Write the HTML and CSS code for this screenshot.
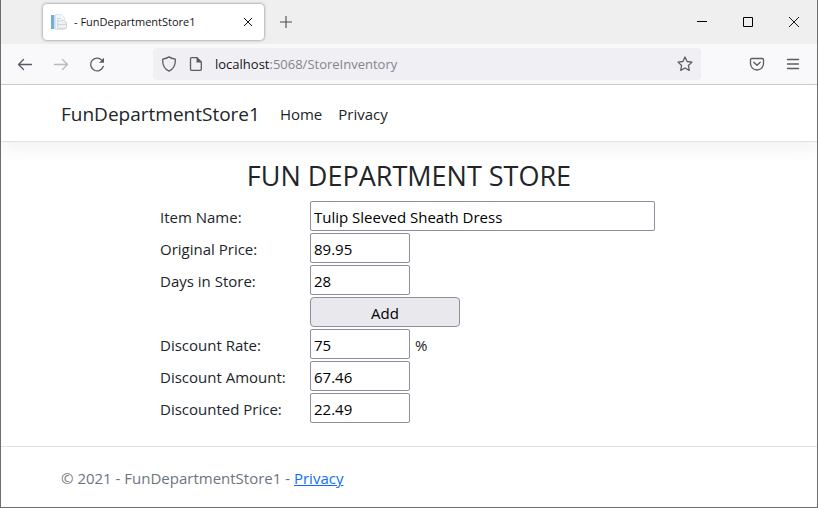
FILE: index.html
```html
<!DOCTYPE html>
<html lang="en">
<head>
    <meta charset="UTF-8">
    <meta name="viewport" content="width=device-width, initial-scale=1.0">
    <title>- FunDepartmentStore1</title>
    <link rel="stylesheet" href="styles.css">
</head>
<body>
    <div class="window">
        <!-- Tab strip -->
        <div class="tab-bar">
            <div class="tab">
                <svg class="favicon" width="16" height="16" viewBox="0 0 16 16">
                    <path d="M4.500.5h6l3 3v12h-9z" fill="#f4f6f8" stroke="#dfe5ea"/>
                    <path d="M0 1h3v14H0z" fill="#6fb1dc"/>
                    <path d="M3 1h1v14H3z" fill="#c5e0f1"/>
                    <path d="M6 4.500h4M6 6.500h2M6 12.500h1" stroke="#cdd5dc"/>
                    <path d="M6.500 8.500v-1h2l1-1h4l1 1v1h1v6h-9z" fill="#eef1f4" stroke="#cfd6dc"/>
                    <path d="M7 10.500h8" stroke="#cfd6dc"/>
                </svg>
                <span class="tab-title">- FunDepartmentStore1</span>
                <button class="tab-close" aria-label="Close tab">
                    <svg width="10" height="10" viewBox="0 0 10 10"><path d="M1 1l8 8M9 1l-8 8" stroke="#15141a"/></svg>
                </button>
            </div>
            <button class="icon-btn new-tab" aria-label="New tab">
                <svg width="12" height="12" viewBox="0 0 12 12"><path d="M6 0v12M0 6h12" stroke="#4a4a55" stroke-width="1.1"/></svg>
            </button>
            <div class="window-controls">
                <button class="icon-btn" aria-label="Minimize">
                    <svg width="10" height="10" viewBox="0 0 10 10"><path d="M0 4.500h10" stroke="#000"/></svg>
                </button>
                <button class="icon-btn" aria-label="Maximize">
                    <svg width="10" height="10" viewBox="0 0 10 10"><path d="M.5.5h9v9h-9z" fill="none" stroke="#000"/></svg>
                </button>
                <button class="icon-btn" aria-label="Close">
                    <svg width="10" height="10" viewBox="0 0 10 10"><path d="M0 0l10 10M10 0L0 10" stroke="#000" stroke-width=".9"/></svg>
                </button>
            </div>
        </div>

        <!-- Address bar -->
        <div class="toolbar">
            <div class="nav-buttons">
                <button class="icon-btn" aria-label="Back">
                    <svg width="16" height="16" viewBox="0 0 16 16" class="line"><path d="M14.500 8.500H1.500M6.500 3.500l-5 5 5 5"/></svg>
                </button>
                <button class="icon-btn" aria-label="Forward" disabled>
                    <svg width="16" height="16" viewBox="0 0 16 16" class="line"><path d="M1.500 8.500h13M9.500 3.500l5 5-5 5"/></svg>
                </button>
                <button class="icon-btn" aria-label="Reload">
                    <svg width="16" height="16" viewBox="0 0 16 16" class="line"><path d="M14.300 10.300A6.400 6.400 0 1 1 12.800 4.100"/><path d="M15 1.800v5h-5z" fill="#5b5b66" stroke="none"/></svg>
                </button>
            </div>
            <div class="url-bar">
                <svg width="16" height="16" viewBox="0 0 16 16" class="line"><path d="M8 .9c2 1.400 4 1.900 6.300 2.300v1.800c0 4.500-2 8-6.300 10.100C3.700 13 1.700 9.500 1.700 5V3.200C4 2.800 6 2.300 8 .9z"/></svg>
                <svg width="16" height="16" viewBox="0 0 16 16" class="line"><path d="M3.500 1.700h5.500l4.300 4.300v7.300a1 1 0 0 1-1 1H3.500a1 1 0 0 1-1-1V2.700a1 1 0 0 1 1-1z"/><path d="M8.500 1.200v5.300h5.300z" fill="#5b5b66" stroke="none"/></svg>
                <span class="url"><span class="host">localhost</span>:5068/StoreInventory</span>
                <svg width="16" height="16" viewBox="0 0 16 16" class="line"><path d="M8 1l2.100 4.500 4.900.6-3.600 3.400.9 4.900L8 12l-4.300 2.400.9-4.900L1 6.100l4.900-.6z"/></svg>
            </div>
            <div class="menu-buttons">
                <button class="icon-btn" aria-label="Save to Pocket">
                    <svg width="16" height="16" viewBox="0 0 16 16" class="line"><path d="M2.700 2.500h10.600a1.200 1.200 0 0 1 1.200 1.200v3.800a6.500 6.500 0 0 1-13 0V3.700a1.200 1.200 0 0 1 1.200-1.200z"/><path d="M4.800 6.200L8 9.300l3.200-3.100"/></svg>
                </button>
                <button class="icon-btn" aria-label="Open menu">
                    <svg width="16" height="16" viewBox="0 0 16 16" class="line"><path d="M2.500 3.500h11M2.500 8h11M2.500 12.500h11"/></svg>
                </button>
            </div>
        </div>

        <!-- Page -->
        <header class="site-header">
            <a class="brand" href="#">FunDepartmentStore1</a>
            <nav class="site-nav">
                <a href="#">Home</a>
                <a href="#">Privacy</a>
            </nav>
        </header>

        <main class="main">
            <h1>FUN DEPARTMENT STORE</h1>
            <form class="inventory">
                <label for="itemName">Item Name:</label>
                <div class="field"><input type="text" class="wide" id="itemName" value="Tulip Sleeved Sheath Dress"></div>

                <label for="originalPrice">Original Price:</label>
                <div class="field"><input type="text" id="originalPrice" value="89.95"></div>

                <label for="daysInStore">Days in Store:</label>
                <div class="field"><input type="text" id="daysInStore" value="28"></div>

                <button type="button" class="add-btn">Add</button>

                <label for="discountRate">Discount Rate:</label>
                <div class="field"><input type="text" id="discountRate" value="75"> <span class="unit">%</span></div>

                <label for="discountAmount">Discount Amount:</label>
                <div class="field"><input type="text" id="discountAmount" value="67.46"></div>

                <label for="discountedPrice">Discounted Price:</label>
                <div class="field"><input type="text" id="discountedPrice" value="22.49"></div>
            </form>
        </main>

        <footer class="site-footer">
            &copy; 2021 - FunDepartmentStore1 - <a href="#">Privacy</a>
        </footer>
    </div>
</body>
</html>
```

FILE: styles.css
```css
* {
    box-sizing: border-box;
}

body {
    margin: 0;
    font-family: "Segoe UI", "Open Sans", sans-serif;
    font-size: 15px;
    line-height: 24px;
    color: #212529;
    background: #fff;
}

.window {
    display: flex;
    flex-direction: column;
    min-height: 100vh;
    border: 1px solid #6e6e6e;
    border-top: none;
}

button,
input {
    font: inherit;
    color: #000;
}

svg {
    display: block;
    flex: none;
}

.line {
    fill: none;
    stroke: #5b5b66;
    stroke-width: 1.3;
    stroke-linecap: round;
    stroke-linejoin: round;
}

.icon-btn {
    display: flex;
    align-items: center;
    justify-content: center;
    padding: 0;
    border: none;
    background: none;
}

.icon-btn:disabled {
    opacity: 0.4;
}

/* Tab strip */
.tab-bar {
    display: flex;
    align-items: center;
    height: 44px;
    padding-left: 42px;
    background: #efefef;
}

.tab {
    display: flex;
    align-items: center;
    gap: 7px;
    width: 221px;
    height: 36px;
    padding: 0 11px 0 8px;
    border-radius: 4px;
    background: #fff;
    box-shadow: 0 0 3px rgba(0, 0, 0, 0.5);
}

.tab-title {
    flex: 1;
    font-size: 11px;
    color: #15141a;
}

.tab-close {
    padding: 0;
    border: none;
    background: none;
}

.new-tab {
    width: 44px;
    height: 32px;
}

.window-controls {
    display: flex;
    margin-left: auto;
}

.window-controls .icon-btn {
    width: 46px;
    height: 32px;
}

/* Address bar */
.toolbar {
    display: flex;
    align-items: center;
    height: 41px;
    padding: 0 16px;
    background: #f9f9fb;
    border-bottom: 1px solid #ccccce;
}

.nav-buttons,
.menu-buttons {
    display: flex;
    gap: 20px;
}

.url-bar {
    display: flex;
    flex: 1;
    align-items: center;
    gap: 11px;
    height: 32px;
    margin: 0 48px;
    padding: 0 8px;
    border-radius: 4px;
    background: #f0f0f4;
}

.url {
    flex: 1;
    font-size: 13px;
    color: #84848c;
}

.host {
    color: #15141a;
}

/* Site header */
.site-header {
    display: flex;
    align-items: center;
    gap: 20px;
    height: 57px;
    padding: 2px 60px 0;
    border-bottom: 1px solid #dee2e6;
    box-shadow: 0 8px 16px rgba(0, 0, 0, 0.05);
}

.site-header a {
    color: #212529;
    text-decoration: none;
}

.brand {
    font-size: 19px;
}

.site-nav {
    display: flex;
    gap: 16px;
}

/* Inventory form */
.main {
    flex: 1;
    padding: 16px 60px 0;
}

h1 {
    margin: 0 0 6px;
    font-size: 27px;
    font-weight: 400;
    line-height: 36px;
    text-align: center;
}

.inventory {
    display: grid;
    grid-template-columns: 150px 348px;
    grid-auto-rows: 32px;
    justify-content: center;
    align-items: center;
}

.inventory label,
.unit {
    padding-top: 2px;
}

.field {
    display: flex;
    align-items: center;
    gap: 5px;
}

.field input {
    width: 100px;
    height: 30px;
    padding: 2px 3px 0;
    border: 1px solid #8f8f9d;
    border-radius: 2px;
    background: #fff;
}

.field .wide {
    width: 345px;
}

.add-btn {
    grid-column: 2;
    width: 150px;
    height: 30px;
    padding: 2px 0 0;
    border: 1px solid #8f8f9d;
    border-radius: 4px;
    background: #e9e9ed;
}

/* Footer */
.site-footer {
    padding: 2px 60px 0;
    border-top: 1px solid #dee2e6;
    line-height: 58px;
    color: #6c757d;
}

.site-footer a {
    color: #0d6efd;
}
```
